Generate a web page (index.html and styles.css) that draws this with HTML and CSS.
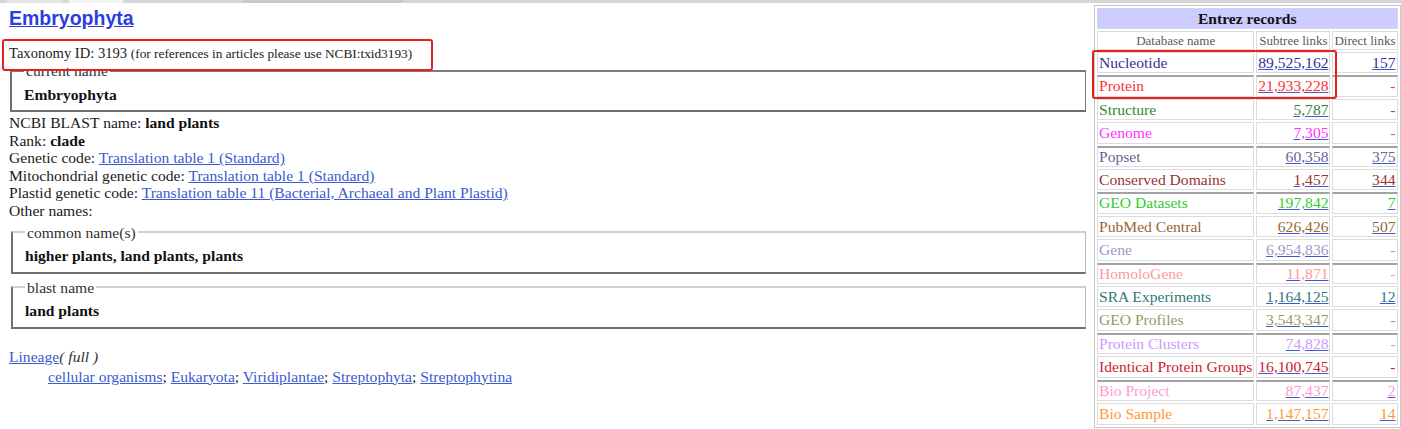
FILE: index.html
```html
<!DOCTYPE html>
<html>
<head>
<meta charset="utf-8">
<title>Embryophyta</title>
<link rel="stylesheet" href="styles.css">
</head>
<body>
<div class="topbar">
  <span class="tab t1"></span><span class="tab t2"></span><span class="tab t3"></span>
</div>
<div class="page">
  <div class="main">
    <h2 class="title"><a href="#">Embryophyta</a></h2>
    <div class="taxid">Taxonomy ID: 3193 <small>(for references in articles please use NCBI:txid3193)</small></div>
    <span class="mark mark-taxid"></span>
    <fieldset class="box first">
      <legend>current name</legend>
      <b>Embryophyta</b>
    </fieldset>
    <div class="info">
      NCBI BLAST name: <b>land plants</b><br>
      Rank: <b>clade</b><br>
      Genetic code: <a href="#">Translation table 1 (Standard)</a><br>
      Mitochondrial genetic code: <a href="#">Translation table 1 (Standard)</a><br>
      Plastid genetic code: <a href="#">Translation table 11 (Bacterial, Archaeal and Plant Plastid)</a><br>
      Other names:
    </div>
    <fieldset class="box">
      <legend>common name(s)</legend>
      <b>higher plants, land plants, plants</b>
    </fieldset>
    <fieldset class="box">
      <legend>blast name</legend>
      <b>land plants</b>
    </fieldset>
    <div class="lineage">
      <a href="#">Lineage</a><i>( full )</i>
      <div class="lineage-list"><a href="#">cellular organisms</a>; <a href="#">Eukaryota</a>; <a href="#">Viridiplantae</a>; <a href="#">Streptophyta</a>; <a href="#">Streptophytina</a></div>
    </div>
  </div>
  <div class="side">
    <table class="entrez">
      <tr><th colspan="3" class="caption">Entrez records</th></tr>
      <tr class="colhead"><td class="c1">Database name</td><td class="c2">Subtree links</td><td class="c3">Direct links</td></tr>
      <tr class="r-nuc"><td>Nucleotide</td><td class="n"><a href="#">89,525,162</a></td><td class="n"><a href="#">157</a></td></tr>
      <tr class="r-prot sep"><td>Protein</td><td class="n"><a href="#">21,933,228</a></td><td class="n">-</td></tr>
      <tr class="r-struct"><td>Structure</td><td class="n"><a href="#">5,787</a></td><td class="n">-</td></tr>
      <tr class="r-genome"><td>Genome</td><td class="n"><a href="#">7,305</a></td><td class="n">-</td></tr>
      <tr class="r-popset sep"><td>Popset</td><td class="n"><a href="#">60,358</a></td><td class="n"><a href="#">375</a></td></tr>
      <tr class="r-cdd"><td>Conserved Domains</td><td class="n"><a href="#">1,457</a></td><td class="n"><a href="#">344</a></td></tr>
      <tr class="r-gds sep"><td>GEO Datasets</td><td class="n"><a href="#">197,842</a></td><td class="n"><a href="#">7</a></td></tr>
      <tr class="r-pmc"><td>PubMed Central</td><td class="n"><a href="#">626,426</a></td><td class="n"><a href="#">507</a></td></tr>
      <tr class="r-gene"><td>Gene</td><td class="n"><a href="#">6,954,836</a></td><td class="n">-</td></tr>
      <tr class="r-homolo sep"><td>HomoloGene</td><td class="n"><a href="#">11,871</a></td><td class="n">-</td></tr>
      <tr class="r-sra"><td>SRA Experiments</td><td class="n"><a href="#">1,164,125</a></td><td class="n"><a href="#">12</a></td></tr>
      <tr class="r-geop"><td>GEO Profiles</td><td class="n"><a href="#">3,543,347</a></td><td class="n">-</td></tr>
      <tr class="r-pclust sep"><td>Protein Clusters</td><td class="n"><a href="#">74,828</a></td><td class="n">-</td></tr>
      <tr class="r-ipg"><td>Identical Protein Groups</td><td class="n"><a href="#">16,100,745</a></td><td class="n">-</td></tr>
      <tr class="r-bproj sep"><td>Bio Project</td><td class="n"><a href="#">87,437</a></td><td class="n"><a href="#">2</a></td></tr>
      <tr class="r-bsamp"><td>Bio Sample</td><td class="n"><a href="#">1,147,157</a></td><td class="n"><a href="#">14</a></td></tr>
    </table>
    <span class="mark mark-table"></span>
  </div>
</div>
</body>
</html>
```

FILE: styles.css
```css
html, body {
  margin: 0;
  padding: 0;
  background: #ffffff;
}
body {
  font-family: "Liberation Serif", "Times New Roman", serif;
  font-size: 15.6px;
  color: #1a1a1a;
  overflow: hidden;
}
a {
  color: #3a5ad0;
}

/* top strip */
.topbar {
  height: 3px;
  background: #d6d6d6;
  display: flex;
  align-items: flex-start;
}
.tab {
  display: block;
  height: 3px;
}
.t1 { width: 56px; margin-left: 7px; background: #e4e4e4; }
.t2 { width: 54px; margin-left: 6px; background: #f3f3f3; }
.t3 { width: 160px; margin-left: 120px; background: #c8c8c8; }

.page {
  display: flex;
  position: relative;
}
.main {
  flex: 1;
  padding-left: 9px;
  padding-right: 8px;
  position: relative;
}

.title {
  margin: 3px 0 0 0;
  font-family: "Liberation Sans", Arial, sans-serif;
  font-size: 19.5px;
  line-height: 24px;
  font-weight: bold;
}
.title a {
  color: #2a3fdc;
}

.taxid {
  margin-top: 15px;
  line-height: 17px;
  font-size: 14.6px;
  color: #222;
}
.taxid small {
  font-size: 13.3px;
}

.mark {
  position: absolute;
  border: 2px solid #e8201c;
  border-radius: 3px;
  z-index: 5;
  pointer-events: none;
}
.mark-taxid {
  left: 2px;
  top: 36px;
  width: 427px;
  height: 28px;
}

.box {
  margin: 0 0 0 2px;
  padding: 0 12px 8px 12px;
  border-style: solid;
  border-width: 2px 1px 2px 2px;
  border-top-color: #d0d0d0;
  border-left-color: #6f6f6f;
  border-bottom-color: #6f6f6f;
  border-right-color: #b8b8b8;
  line-height: 17px;
}
.box legend {
  padding: 0 2px;
  margin-left: 0;
  line-height: 17px;
  color: #333;
}
.box b {
  display: block;
  padding-top: 6px;
  color: #111;
}
.box.first {
  margin-left: 1px;
  padding-bottom: 7px;
  border-top-color: #7a7a7a;
  border-right-color: #7a7a7a;
}
.box.first b {
  padding-top: 7px;
}
.box + .box {
  margin-top: 5px;
}

.info {
  margin-top: 2px;
  margin-bottom: 4px;
  line-height: 17.6px;
}
.info b { color: #111; }

.lineage {
  margin-top: 18px;
  line-height: 20px;
}
.lineage i {
  color: #333;
}
.lineage-list {
  padding-left: 39px;
}

/* right side */
.side {
  width: 307px;
  flex: none;
  position: relative;
  padding-top: 2px;
}
.entrez {
  border-collapse: separate;
  border-spacing: 2px;
  border: 1px solid #c8c8c8;
}
.entrez td, .entrez th {
  border: 1px solid #dcdcdc;
  padding: 1px 1px;
  line-height: 17.4px;
  white-space: nowrap;
}
.entrez .caption {
  background: #ccccff;
  font-weight: bold;
  line-height: 19px;
  padding: 0 2px;
  color: #111;
  border-color: #d4d4f0;
}
.entrez .colhead td {
  font-size: 13px;
  line-height: 17px;
  padding: 0 1px;
  text-align: center;
  color: #555a66;
}
.entrez .colhead .c1 { width: 152px; }
.entrez .colhead .c2 { width: 70px; }
.entrez .colhead .c3 { width: 60px; }
.entrez .n {
  text-align: right;
}
.entrez a {
  color: inherit;
  text-decoration-color: #3d5ad6;
}
.entrez tr.sep td {
  border-top: 2px solid #a2a2a2;
  padding-top: 0;
}

.r-nuc { color: #333399; }
.r-prot { color: #ff3333; }
.r-struct { color: #338833; }
.r-genome { color: #ff33ff; }
.r-popset { color: #666699; }
.r-cdd { color: #993333; }
.r-gds { color: #33cc33; }
.r-pmc { color: #996633; }
.r-gene { color: #9999cc; }
.r-homolo { color: #ff9999; }
.r-sra { color: #337777; }
.r-geop { color: #999966; }
.r-pclust { color: #cc99ff; }
.r-ipg { color: #cc2233; }
.r-bproj { color: #ff99cc; }
.r-bsamp { color: #ff9933; }

.mark-table {
  left: -2px;
  top: 47px;
  width: 241px;
  height: 45px;
}
```
